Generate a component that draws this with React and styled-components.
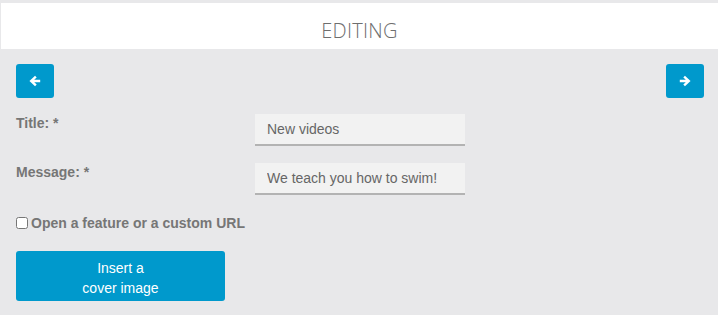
import React from "react";
import styled, { createGlobalStyle } from "styled-components";

const GlobalStyle = createGlobalStyle`
  html, body {
    margin: 0;
    padding: 0;
    background: #e8e8ea;
  }
  body {
    font-family: "Liberation Sans", Arial, sans-serif;
  }
`;

const Page = styled.div`
  width: 718px;
  height: 315px;
  padding-top: 3px;
  box-sizing: border-box;
  background: #e8e8ea;
  overflow: hidden;
`;

const Header = styled.div`
  height: 46px;
  margin-left: 1px;
  background: #ffffff;
  display: flex;
  align-items: center;
  justify-content: center;
  font-family: "Open Sans", sans-serif;
  font-weight: 300;
  font-size: 20px;
  letter-spacing: 0.3px;
  color: #6e6e6e;
  padding-top: 8px;
  box-sizing: border-box;
`;

const Body = styled.div`
  padding: 15px 14px 0 16px;
`;

const NavRow = styled.div`
  display: flex;
  justify-content: space-between;
  margin-bottom: 16px;
`;

const NavButton = styled.button`
  width: 38px;
  height: 34px;
  border: none;
  border-radius: 3px;
  background: #0099cc;
  color: #fff;
  display: flex;
  align-items: center;
  justify-content: center;
  padding: 0;
  cursor: pointer;
`;

const Form = styled.div`
  display: grid;
  grid-template-columns: 239px 210px;
  row-gap: 17px;
`;

const Label = styled.label`
  font-size: 14px;
  font-weight: bold;
  color: #767676;
  padding-top: 1px;
  line-height: 16px;
`;

const Input = styled.input`
  height: 32px;
  box-sizing: border-box;
  border: none;
  border-bottom: 2px solid #b3b3b3;
  background: #f2f2f2;
  padding: 0 12px;
  font-family: "Liberation Sans", Arial, sans-serif;
  font-size: 14px;
  color: #666;
  outline: none;
`;

const CheckRow = styled.label`
  display: flex;
  align-items: center;
  gap: 3px;
  margin-top: 20px;
  font-size: 14px;
  font-weight: bold;
  color: #767676;
`;

const Check = styled.input`
  margin: 0;
  width: 12px;
  height: 12px;
`;

const CoverButton = styled.button`
  margin-top: 20px;
  width: 209px;
  height: 50px;
  border: none;
  border-radius: 3px;
  background: #0099cc;
  color: #fff;
  font-family: "Liberation Sans", Arial, sans-serif;
  font-size: 14px;
  line-height: 20px;
  padding: 3px 0 0;
  display: block;
`;

const Arrow = ({ dir }) => (
  <svg width="12" height="12" viewBox="0 0 12 12">
    <g transform={dir === "left" ? "" : "translate(12 0) scale(-1 1)"}>
      <path
        d="M10 6H3.2M6 2.4L2.2 6 6 9.6"
        stroke="#fff"
        strokeWidth="2.4"
        fill="none"
        strokeLinecap="square"
      />
    </g>
  </svg>
);

const App = () => {
  return (
    <>
      <GlobalStyle />
      <Page>
        <Header>EDITING</Header>
        <Body>
          <NavRow>
            <NavButton>
              <Arrow dir="left" />
            </NavButton>
            <NavButton>
              <Arrow dir="right" />
            </NavButton>
          </NavRow>
          <Form>
            <Label>Title: *</Label>
            <Input defaultValue="New videos" />
            <Label>Message: *</Label>
            <Input defaultValue="We teach you how to swim!" />
          </Form>
          <CheckRow>
            <Check type="checkbox" />
            Open a feature or a custom URL
          </CheckRow>
          <CoverButton>
            Insert a
            <br />
            cover image
          </CoverButton>
        </Body>
      </Page>
    </>
  );
};

export default App;
